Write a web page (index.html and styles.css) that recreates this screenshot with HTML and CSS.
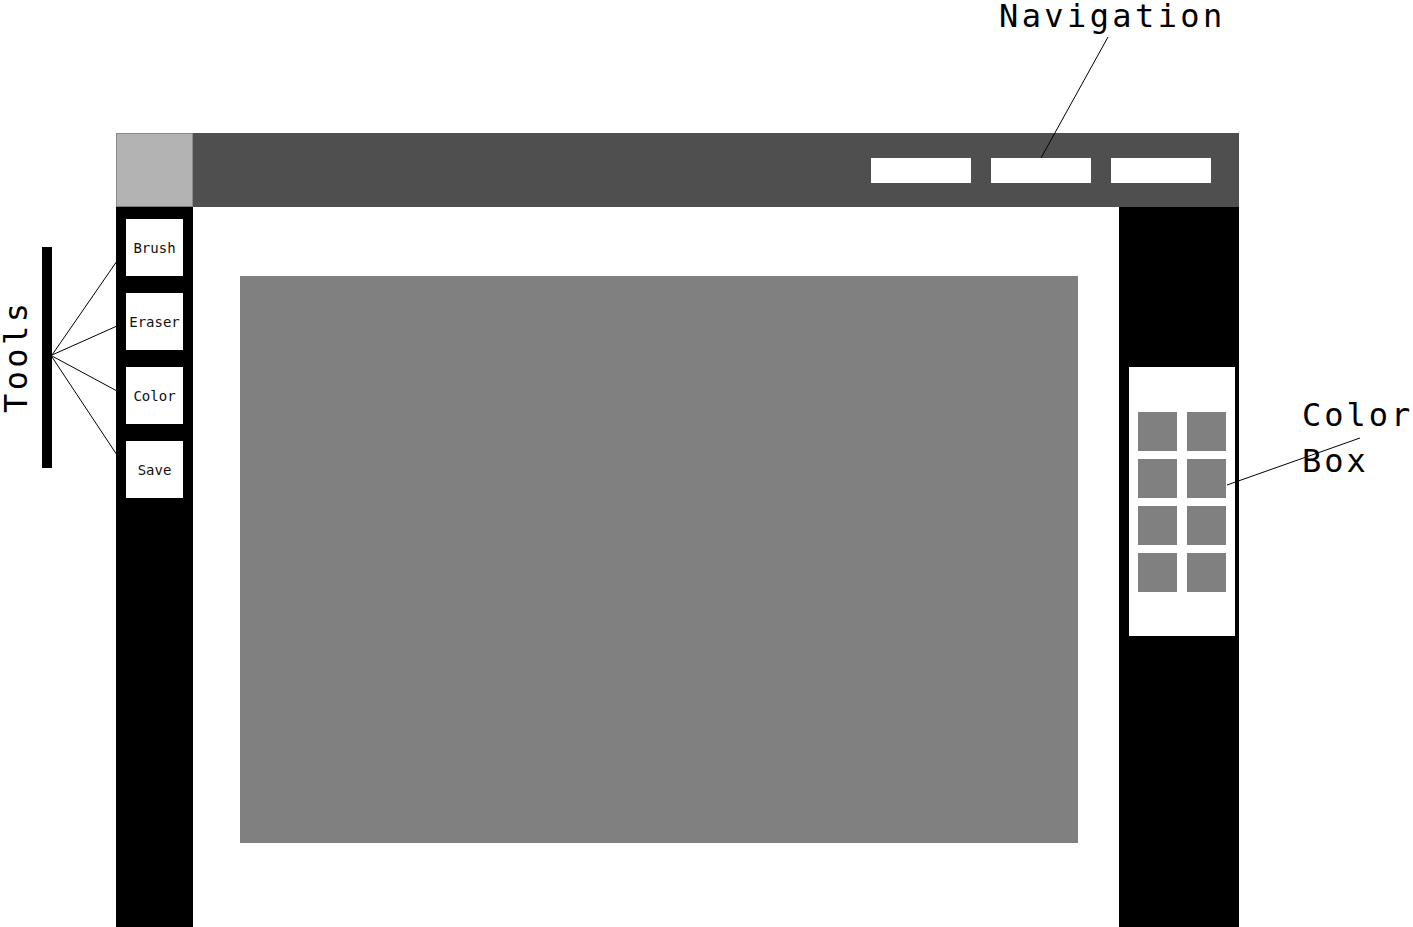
FILE: index.html
```html
<!DOCTYPE html>
<html>
<head>
  <meta charset="utf-8">
  <meta name="viewport" content="width=device-width, initial-scale=1.0">
  <title>Paint App Wireframe</title>
  <link rel="stylesheet" href="styles.css">
</head>
<body>
  <div class="sheet">
    <div class="app">
      <div class="logo"></div>
      <header class="topbar">
        <nav class="nav">
          <a class="nav-item" href="#"></a>
          <a class="nav-item" href="#"></a>
          <a class="nav-item" href="#"></a>
        </nav>
      </header>
      <aside class="tools">
        <button class="tool">Brush</button>
        <button class="tool">Eraser</button>
        <button class="tool">Color</button>
        <button class="tool">Save</button>
      </aside>
      <main class="workspace">
        <div class="canvas"></div>
      </main>
      <aside class="palette">
        <div class="colorbox">
          <span class="swatch"></span>
          <span class="swatch"></span>
          <span class="swatch"></span>
          <span class="swatch"></span>
          <span class="swatch"></span>
          <span class="swatch"></span>
          <span class="swatch"></span>
          <span class="swatch"></span>
        </div>
      </aside>
    </div>

    <!-- annotations -->
    <svg class="leaders" width="1413" height="927" viewBox="0 0 1413 927">
      <rect x="42" y="247" width="10" height="221" fill="#000"/>
      <line x1="52" y1="355" x2="117" y2="261"/>
      <line x1="52" y1="355" x2="117" y2="326"/>
      <line x1="52" y1="356" x2="117" y2="391"/>
      <line x1="52" y1="357" x2="117" y2="455"/>
      <line x1="1108" y1="37" x2="1041" y2="158"/>
      <line x1="1360" y1="438" x2="1227" y2="485"/>
    </svg>
    <div class="note note-nav">Navigation</div>
    <div class="note note-tools">Tools</div>
    <div class="note note-colors">Color<br>Box</div>
  </div>
</body>
</html>
```

FILE: styles.css
```css
html, body {
  margin: 0;
  padding: 0;
  background: #fff;
}
body {
  font-family: "DejaVu Sans Mono", "Liberation Mono", monospace;
  overflow: hidden;
}
.sheet {
  position: relative;
  width: 1413px;
  height: 927px;
  box-sizing: border-box;
  padding: 133px 0 0 116px;
}

/* app frame */
.app {
  display: grid;
  grid-template-columns: 77px 926px 120px;
  grid-template-rows: 74px 720px;
  width: 1123px;
}
.logo {
  background: #b3b3b3;
  border: 1px solid #8c8c8c;
  border-bottom-color: #7a7a7a;
}
.topbar {
  grid-column: 2 / 4;
  background: #4f4f4f;
  display: flex;
  justify-content: flex-end;
  align-items: flex-start;
  padding: 25px 28px 0 0;
}
.nav {
  display: flex;
  gap: 20px;
}
.nav-item {
  display: block;
  width: 100px;
  height: 25px;
  background: #fff;
}

.tools {
  background: #000;
  display: flex;
  flex-direction: column;
  gap: 17px;
  padding: 12px 0 0 10px;
}
.tool {
  width: 57px;
  height: 57px;
  margin: 0;
  padding: 0;
  border: none;
  background: #fff;
  font-family: "DejaVu Sans Mono", "Liberation Mono", monospace;
  font-size: 14px;
  color: #111;
  text-align: center;
}

.workspace {
  background: #fff;
  padding: 69px 0 0 47px;
}
.canvas {
  width: 838px;
  height: 567px;
  background: #808080;
}

.palette {
  background: #000;
  padding: 160px 0 0 10px;
}
.colorbox {
  width: 106px;
  height: 269px;
  box-sizing: border-box;
  background: #fff;
  padding: 45px 0 0 9px;
  display: grid;
  grid-template-columns: 39px 39px;
  grid-auto-rows: 39px;
  column-gap: 10px;
  row-gap: 8px;
  align-content: start;
}
.swatch {
  background: #808080;
}

/* annotation layer */
.leaders {
  position: absolute;
  left: 0;
  top: 0;
  pointer-events: none;
}
.leaders line {
  stroke: #000;
  stroke-width: 1;
}
.note {
  position: absolute;
  font-size: 32px;
  line-height: 32px;
  letter-spacing: 3.4px;
  color: #000;
  white-space: nowrap;
}
.note-nav {
  left: 999px;
  top: 0;
}
.note-colors {
  left: 1302px;
  top: 392px;
  line-height: 46px;
  letter-spacing: 3px;
}
.note-tools {
  left: 0;
  top: 413px;
  transform-origin: left top;
  transform: rotate(-90deg);
}
```
